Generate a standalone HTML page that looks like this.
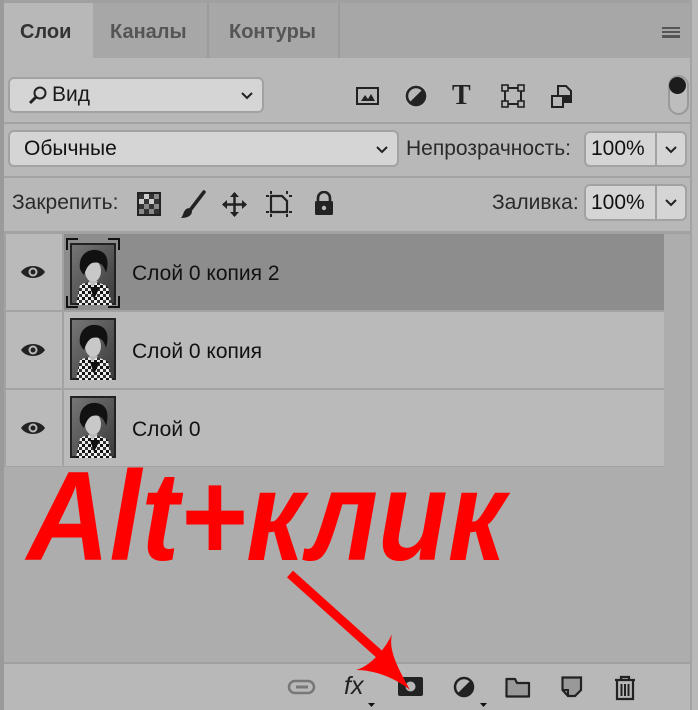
<!DOCTYPE html>
<html><head><meta charset="utf-8"><style>
*{margin:0;padding:0;box-sizing:border-box}
body{width:698px;height:710px;overflow:hidden;background:#b8b8b8;font-family:"Liberation Sans","DejaVu Sans",sans-serif;position:relative;color:#1a1a1a}
.a{position:absolute}
.tabbar{left:0;top:0;width:698px;height:58px;background:#a7a7a7;border-top:3px solid #a0a0a0}
.tab{top:3px;height:55px;font-size:20px;font-weight:bold;line-height:58px;color:#555}
.dd{background:#d5d5d5;border:2px solid #a2a2a2;border-radius:6px}
.lbl{font-size:21px;color:#2a2a2a}
.sep{left:0;width:698px;height:2px;background:#a3a3a3}
.lname{left:132px;font-size:21px;color:#111}
</style></head><body>
<div class="a" style="left:0;top:0;width:4px;height:710px;background:#9a9a9a;z-index:5"></div>
<div class="a" style="left:690px;top:0;width:8px;height:710px;background:#b8b8b8;z-index:4;border-left:2px solid #a3a3a3"></div>
<div class="a tabbar"></div>
<div class="a tab" style="left:4px;width:89px;background:#b8b8b8;color:#333;padding-left:16px;height:58px">Слои</div>
<div class="a tab" style="left:110px">Каналы</div>
<div class="a" style="left:207px;top:3px;width:2px;height:55px;background:#9c9c9c"></div>
<div class="a tab" style="left:229px">Контуры</div>
<div class="a" style="left:338px;top:3px;width:2px;height:55px;background:#9c9c9c"></div>
<div class="a" style="left:662px;top:27px;width:18px;height:11px;border-top:2px solid #555;border-bottom:2px solid #555"></div>
<div class="a" style="left:662px;top:31px;width:18px;height:2px;background:#555"></div>
<div class="a" style="left:662px;top:35px;width:18px;height:1px;background:#555"></div>

<div class="a dd" style="left:8px;top:77px;width:256px;height:36px"></div>
<svg class="a" style="left:28px;top:86px" width="20" height="20" viewBox="0 0 20 20"><circle cx="12" cy="7" r="5.5" fill="none" stroke="#222" stroke-width="2"/><path d="M8 11 L2 17" stroke="#222" stroke-width="3"/></svg>
<div class="a" style="left:52px;top:83px;font-size:21px">Вид</div>
<svg class="a" style="left:240px;top:91px" width="14" height="10"><path d="M2 2 L7 7 L12 2" fill="none" stroke="#222" stroke-width="2"/></svg>
<svg class="a" style="left:356px;top:85px" width="24" height="22"><rect x="1" y="3" width="21" height="16" fill="none" stroke="#222" stroke-width="2"/><path d="M5 16 L9 10 L12 14 L15 9 L19 16Z" fill="#222"/></svg>
<svg class="a" style="left:405px;top:85px" width="24" height="24"><circle cx="11" cy="11" r="9" fill="none" stroke="#222" stroke-width="2.5"/><path d="M17.4 4.6 A9 9 0 0 1 4.6 17.4Z" fill="#222"/></svg>
<div class="a" style="left:452px;top:80px;font-family:'Liberation Serif',serif;font-weight:bold;font-size:28px;color:#222">T</div>
<svg class="a" style="left:501px;top:84px" width="25" height="25"><rect x="4" y="4" width="16" height="16" fill="none" stroke="#222" stroke-width="2"/><g fill="#b8b8b8" stroke="#222" stroke-width="1.6"><rect x="1" y="1" width="6" height="6"/><rect x="17" y="1" width="6" height="6"/><rect x="1" y="17" width="6" height="6"/><rect x="17" y="17" width="6" height="6"/></g></svg>
<svg class="a" style="left:551px;top:84px" width="22" height="25"><path d="M7 2 H15 L20 7 V18 H7Z" fill="none" stroke="#222" stroke-width="2"/><rect x="1" y="12" width="11" height="11" fill="#b8b8b8" stroke="#222" stroke-width="2"/><path d="M13 11 h6v6h-6z" fill="#222"/></svg>
<div class="a" style="left:668px;top:75px;width:21px;height:40px;border:2px solid #999;border-radius:11px;background:#bdbdbd"></div>
<div class="a" style="left:669px;top:77px;width:17px;height:17px;border-radius:50%;background:#1c1c1c"></div>
<div class="a sep" style="top:122px"></div>

<div class="a dd" style="left:8px;top:130px;width:391px;height:37px"></div>
<div class="a" style="left:24px;top:137px;font-size:21px;color:#111">Обычные</div>
<svg class="a" style="left:375px;top:145px" width="14" height="10"><path d="M2 2 L7 7 L12 2" fill="none" stroke="#222" stroke-width="2"/></svg>
<div class="a lbl" style="left:406px;top:137px">Непрозрачность:</div>
<div class="a dd" style="left:584px;top:131px;width:103px;height:36px"></div>
<div class="a" style="left:655px;top:133px;width:2px;height:32px;background:#a2a2a2"></div>
<div class="a" style="left:591px;top:137px;font-size:21px;color:#111">100%</div>
<svg class="a" style="left:664px;top:145px" width="14" height="10"><path d="M2 2 L7 7 L12 2" fill="none" stroke="#222" stroke-width="2"/></svg>
<div class="a sep" style="top:176px"></div>

<div class="a lbl" style="left:12px;top:191px">Закрепить:</div>
<svg class="a" style="left:137px;top:192px" width="24" height="24"><rect x="1" y="1" width="22" height="22" fill="#888" stroke="#222" stroke-width="2"/><g fill="#333"><rect x="2" y="2" width="5" height="5"/><rect x="12" y="2" width="5" height="5"/><rect x="7" y="7" width="5" height="5"/><rect x="17" y="7" width="5" height="5"/><rect x="2" y="12" width="5" height="5"/><rect x="12" y="12" width="5" height="5"/><rect x="7" y="17" width="5" height="5"/><rect x="17" y="17" width="5" height="5"/></g><g fill="#ccc"><rect x="7" y="2" width="5" height="5"/><rect x="2" y="7" width="5" height="5"/><rect x="12" y="7" width="5" height="5"/></g></svg>
<svg class="a" style="left:179px;top:190px" width="28" height="30"><path d="M25 2 L12 19" stroke="#222" stroke-width="3.5" stroke-linecap="round"/><path d="M10 18 C4 19 5 25 2 28 C8 28 13 26 13 21Z" fill="#222"/></svg>
<svg class="a" style="left:221px;top:191px" width="27" height="27"><path d="M13.5 2 V25 M2 13.5 H25" stroke="#222" stroke-width="2.5"/><path d="M13.5 1 L9 6 H18Z M13.5 26 L9 21 H18Z M1 13.5 L6 9 V18Z M26 13.5 L21 9 V18Z" fill="#222"/></svg>
<svg class="a" style="left:265px;top:191px" width="28" height="26"><path d="M6 5 H17 L22 10 V21 H6Z" fill="none" stroke="#222" stroke-width="2.2"/><g stroke="#222" stroke-width="2"><path d="M1 5h3M24 21h3M6 0v3M22 23v3M1 21h3M22 0v3M24 5h3M6 23v3"/></g></svg>
<svg class="a" style="left:313px;top:191px" width="22" height="25"><path d="M5 11 V7 A6 6 0 0 1 17 7 V11" fill="none" stroke="#222" stroke-width="2.6"/><rect x="2" y="10" width="18" height="14" rx="1.5" fill="#222"/><circle cx="11" cy="17" r="2.2" fill="#b8b8b8"/></svg>
<div class="a lbl" style="left:492px;top:191px">Заливка:</div>
<div class="a dd" style="left:584px;top:184px;width:103px;height:37px"></div>
<div class="a" style="left:655px;top:186px;width:2px;height:33px;background:#a2a2a2"></div>
<div class="a" style="left:591px;top:191px;font-size:21px;color:#111">100%</div>
<svg class="a" style="left:664px;top:198px" width="14" height="10"><path d="M2 2 L7 7 L12 2" fill="none" stroke="#222" stroke-width="2"/></svg>

<div class="a" style="left:4px;top:231px;width:686px;height:431px;background:#adadad;border-top:3px solid #a2a2a2"></div>
<svg width="0" height="0" style="position:absolute"><defs>
<linearGradient id="bg" x1="0" y1="0" x2="1" y2="1"><stop offset="0" stop-color="#777"/><stop offset="1" stop-color="#3a3a3a"/></linearGradient>
<pattern id="pt" width="6" height="6" patternUnits="userSpaceOnUse"><rect width="6" height="6" fill="#eee"/><rect width="3" height="3" fill="#111"/><rect x="3" y="3" width="3" height="3" fill="#333"/></pattern>
<symbol id="th" viewBox="0 0 46 62"><rect x="1" y="1" width="44" height="60" fill="url(#bg)" stroke="#222" stroke-width="2"/><path d="M6 62 L10 42 C16 38 30 38 38 44 L42 62Z" fill="url(#pt)"/><path d="M20 44 L24 56 L30 44" fill="#111"/><ellipse cx="23" cy="28" rx="8" ry="11" fill="#c8c8c8"/><path d="M10 26 C8 12 18 6 26 7 C36 8 40 16 36 30 C34 22 30 18 22 20 C18 22 16 26 14 32 C12 30 11 28 10 26Z" fill="#111"/><path d="M19 38 L22 44 L28 38Z" fill="#bbb"/></symbol>
<symbol id="eye" viewBox="0 0 26 16"><path d="M1 8 C6 0 20 0 25 8 C20 16 6 16 1 8Z" fill="#222"/><circle cx="13" cy="8" r="4.5" fill="#bababa"/><circle cx="13" cy="8" r="2.5" fill="#222"/></symbol>
</defs></svg>

<div class="a" style="left:4px;top:234px;width:660px;height:233px;background:#a3a3a3"></div>
<div class="a" style="left:6px;top:234px;width:56px;height:76px;background:#bababa"></div>
<div class="a" style="left:64px;top:234px;width:600px;height:76px;background:#8d8d8d"></div>
<svg class="a" style="left:20px;top:264px" width="26" height="16"><use href="#eye"/></svg>
<svg class="a" style="left:70px;top:243px" width="46" height="62"><use href="#th"/></svg>
<svg class="a" style="left:66px;top:238px" width="54" height="70" fill="none" stroke="#111" stroke-width="2"><path d="M1 12V1H12M42 1H53V12M1 58V69H12M42 69H53V58"/></svg>
<div class="a lname" style="top:262px">Слой 0 копия 2</div>
<div class="a" style="left:6px;top:312px;width:56px;height:76px;background:#bababa"></div>
<div class="a" style="left:64px;top:312px;width:600px;height:76px;background:#bababa"></div>
<svg class="a" style="left:20px;top:342px" width="26" height="16"><use href="#eye"/></svg>
<svg class="a" style="left:70px;top:318px" width="46" height="62"><use href="#th"/></svg>
<div class="a lname" style="top:340px">Слой 0 копия</div>
<div class="a" style="left:6px;top:390px;width:56px;height:76px;background:#bababa"></div>
<div class="a" style="left:64px;top:390px;width:600px;height:76px;background:#bababa"></div>
<svg class="a" style="left:20px;top:420px" width="26" height="16"><use href="#eye"/></svg>
<svg class="a" style="left:70px;top:396px" width="46" height="62"><use href="#th"/></svg>
<div class="a lname" style="top:418px">Слой 0</div>

<div class="a" style="left:4px;top:662px;width:686px;height:48px;background:#b8b8b8;border-top:2px solid #a0a0a0"></div>
<svg class="a" style="left:287px;top:679px" width="30" height="16"><rect x="2" y="2" width="25" height="12" rx="6" fill="none" stroke="#777" stroke-width="2.5"/><path d="M9 8h12" stroke="#777" stroke-width="3"/></svg>
<div class="a" style="left:344px;top:672px;font-size:25px;font-style:italic;color:#222">fx</div>
<svg class="a" style="left:368px;top:703px" width="8" height="5"><path d="M0 0h7l-3.5 4z" fill="#111"/></svg>
<svg class="a" style="left:398px;top:677px" width="26" height="20"><rect x="0" y="0" width="25" height="19" rx="2" fill="#222"/><circle cx="12.5" cy="9.5" r="5" fill="#b8b8b8"/></svg>
<svg class="a" style="left:453px;top:676px" width="24" height="24"><circle cx="11" cy="11" r="9" fill="none" stroke="#222" stroke-width="2.5"/><path d="M17.4 4.6 A9 9 0 0 1 4.6 17.4Z" fill="#222"/></svg>
<svg class="a" style="left:480px;top:703px" width="8" height="5"><path d="M0 0h7l-3.5 4z" fill="#111"/></svg>
<svg class="a" style="left:505px;top:677px" width="26" height="22"><path d="M1.5 3 V19.5 H24 V6 H12 L10 2 H1.5Z" fill="#999" stroke="#222" stroke-width="2.2" stroke-linejoin="round"/></svg>
<svg class="a" style="left:561px;top:676px" width="22" height="22"><path d="M1.5 1.5 H20 V14 L14 20 H7 L1.5 14Z" fill="#999" stroke="#222" stroke-width="2.2"/><path d="M1.5 14 H7 V20" fill="none" stroke="#222" stroke-width="2"/></svg>
<svg class="a" style="left:614px;top:675px" width="22" height="26"><path d="M1 5 H21 M7 5 V2 H15 V5" fill="none" stroke="#222" stroke-width="2.2"/><path d="M3 6 V24 H19 V6" fill="none" stroke="#222" stroke-width="2.2"/><path d="M7.5 9 V21 M11 9 V21 M14.5 9 V21" stroke="#222" stroke-width="2"/></svg>

<div class="a" style="left:27px;top:446px;font-size:127px;font-weight:bold;font-style:italic;color:#ff0000;line-height:140px;transform:scaleX(0.9);transform-origin:0 0;z-index:6">Alt+клик</div>
<svg class="a" style="left:0;top:0;z-index:7" width="698" height="710"><path d="M290 574 L388 662" stroke="#ff0000" stroke-width="9"/><path d="M410 690 C398 668 388 650 392 634 C384 652 368 667 356 670 C375 670 395 678 410 690Z" fill="#ff0000"/></svg>
</body></html>
